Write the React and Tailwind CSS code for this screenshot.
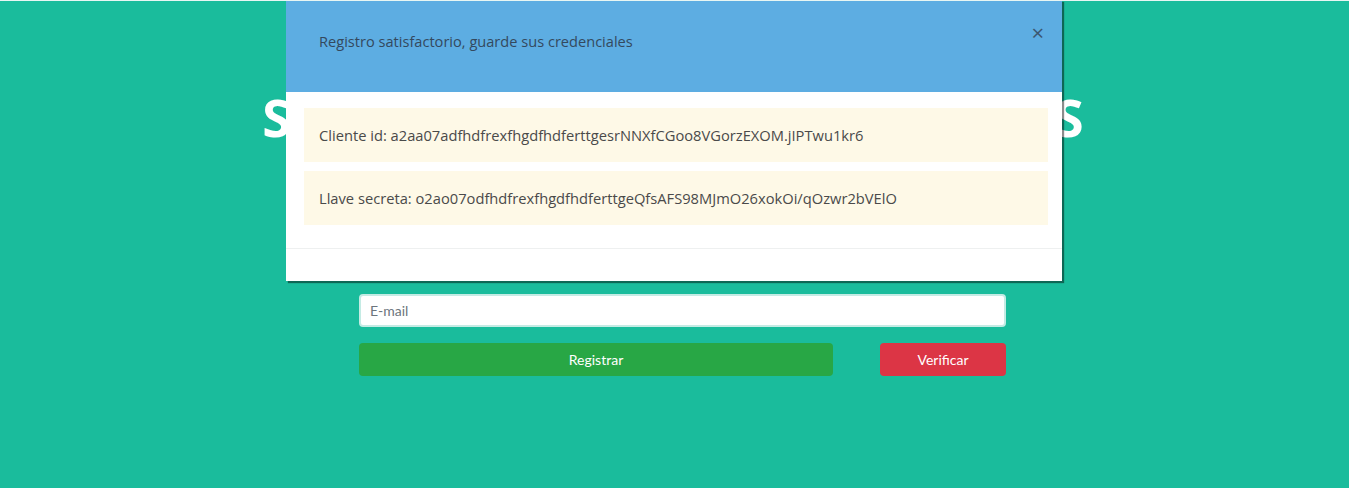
import React from "react";

const App = () => {
  return (
    <div className="relative w-full h-[488px] bg-[#1abc9c] overflow-hidden border-t border-[#e8f6f3]">
      {/* page content behind the modal */}
      <div className="flex flex-col items-center pt-[90px]">
        <h1
          className="text-white text-[52px] font-bold leading-none tracking-[3px] whitespace-nowrap"
          style={{ fontFamily: '"Open Sans", sans-serif' }}
        >
          SOLICITUD DE CREDENCIALES
        </h1>
        <div className="w-[647px] ml-[16px] mt-[151px] flex flex-col gap-[16px]" style={{ fontFamily: "Lato, sans-serif" }}>
          <input
            type="text"
            placeholder="E-mail"
            className="w-full h-[33px] px-[9px] text-[14px] bg-white rounded-[4px] border-2 border-[#c4ebe4] text-[#495057] placeholder:text-[#6c757d] outline-none"
          />
          <div className="flex justify-between">
            <button className="w-[474px] h-[33px] rounded-[4px] bg-[#28a745] text-white text-[14px]">
              Registrar
            </button>
            <button className="w-[126px] h-[33px] rounded-[4px] bg-[#dc3545] text-white text-[14px]">
              Verificar
            </button>
          </div>
        </div>
      </div>

      {/* modal */}
      <div
        className="absolute top-[-1px] left-[286px] w-[776px] bg-white shadow-[2px_2px_1px_rgba(0,0,0,0.45)]"
        style={{ fontFamily: '"Open Sans", sans-serif' }}
      >
        <div className="h-[92px] bg-[#5dade2] flex items-center justify-between pl-[33px] pr-[18px] pb-[8px]">
          <span className="text-[14.6px] text-[#34495e]">Registro satisfactorio, guarde sus credenciales</span>
          <span className="text-[22px] leading-none text-[#3b5670] -mt-[20px]">×</span>
        </div>
        <div className="pt-[16px] pl-[18px] pr-[14px] pb-[23px] flex flex-col gap-[9px] border-b border-[#eef0f0]">
          <div className="h-[54px] bg-[#fef9e7] flex items-center pl-[15px] text-[14.7px] text-[#4a4a4a]">
            Cliente id: a2aa07adfhdfrexfhgdfhdferttgesrNNXfCGoo8VGorzEXOM.jIPTwu1kr6
          </div>
          <div className="h-[54px] bg-[#fef9e7] flex items-center pl-[15px] text-[14.7px] text-[#4a4a4a]">
            Llave secreta: o2ao07odfhdfrexfhgdfhdferttgeQfsAFS98MJmO26xokOi/qOzwr2bVElO
          </div>
        </div>
        <div className="h-[32px]"></div>
      </div>
    </div>
  );
};

export default App;
